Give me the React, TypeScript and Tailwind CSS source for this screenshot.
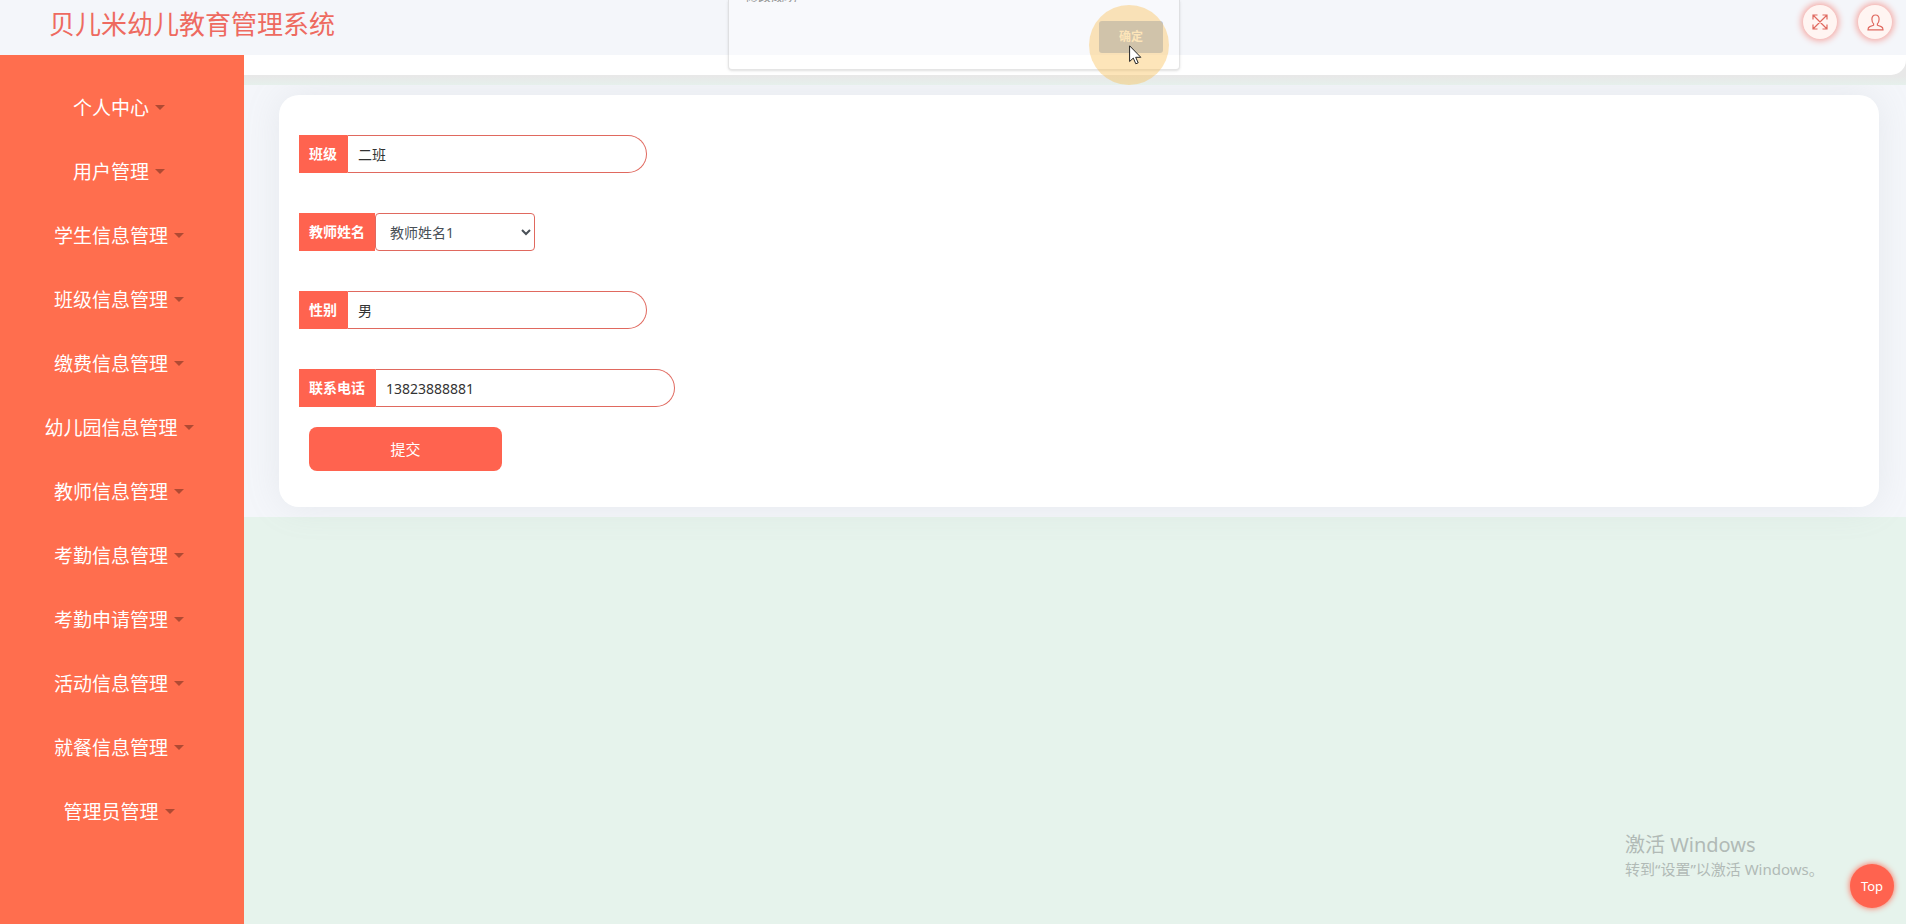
const menu: string[] = [
  '个人中心',
  '用户管理',
  '学生信息管理',
  '班级信息管理',
  '缴费信息管理',
  '幼儿园信息管理',
  '教师信息管理',
  '考勤信息管理',
  '考勤申请管理',
  '活动信息管理',
  '就餐信息管理',
  '管理员管理',
];

const labelClass =
  'flex h-full items-center bg-[#ff634f] px-[10px] font-bold text-white';

function TextField({ id, label, value }: { id: string; label: string; value: string }) {
  return (
    <div className="flex h-[38px]">
      <label htmlFor={id} className={labelClass}>
        {label}
      </label>
      <input
        id={id}
        type="text"
        defaultValue={value}
        className="h-full w-[300px] rounded-r-full border border-[#e0695f] border-l-[#ff634f] bg-white px-[10px] text-[#333] outline-none"
      />
    </div>
  );
}

function Header() {
  const round =
    'flex size-[34px] items-center justify-center rounded-full bg-[#fff5f2] text-[#e0695f] shadow-[0_0_6px_2px_#f5a9a4]';
  return (
    <header className="flex h-[55px] items-start justify-between bg-[#f4f6fa] pl-[49px] pr-[14px]">
      <h1 className="pt-1 text-[26px] leading-10 font-normal text-[#ee6a60]">贝儿米幼儿教育管理系统</h1>
      <div className="flex gap-[21px] pt-[5px]">
        <button type="button" aria-label="全屏" className={round}>
          <svg viewBox="0 0 16 16" className="size-4" fill="none" stroke="currentColor" strokeWidth="1.2">
            <path d="M1 5.500V1h4.500M10.500 1H15v4.500M15 10.500V15h-4.500M5.500 15H1v-4.500M1 1l14 14M15 1L1 15" />
          </svg>
        </button>
        <button type="button" aria-label="用户" className={round}>
          <svg viewBox="0 0 17 17" className="size-[17px]" fill="none" stroke="currentColor" strokeWidth="1.2">
            <path d="M6.600 9.800C5.400 8.600 4.900 7 4.900 5.200C4.900 2.500 6.300 1 8.500 1s3.600 1.500 3.600 4.200c0 1.800-.5 3.400-1.700 4.600v1.400l3.800 1.400c1.300.5 1.800 1.500 1.800 3.200H1c0-1.700.5-2.700 1.800-3.200l3.800-1.400z" />
          </svg>
        </button>
      </div>
    </header>
  );
}

function Sidebar() {
  return (
    <nav className="w-[244px] shrink-0 bg-[#ff6e4e] pt-[22px]">
      <ul>
        {menu.map((item) => (
          <li key={item}>
            <a href="#" className="flex h-16 items-center justify-center gap-[6px] pr-[6px] text-[19px] text-white">
              {item}
              <span className="mb-1 border-x-[5px] border-t-[5px] border-x-transparent border-t-[#b04a33]" />
            </a>
          </li>
        ))}
      </ul>
    </nav>
  );
}

function FadingDialog() {
  return (
    <div className="absolute top-0 left-1/2 z-20 h-[70px] w-[452px] -translate-x-[225px] rounded-b border border-t-0 border-black/10 bg-white/40 shadow-sm">
      <div className="h-[2px] overflow-hidden pl-4">
        <p className="-mt-3 text-[13px] leading-4 text-[#999]">修改成功</p>
      </div>
      <button
        type="button"
        className="absolute top-[21px] right-4 h-8 w-16 rounded-[3px] bg-[#b4c6e6] text-xs font-bold text-white"
      >
        确定
      </button>
      <span className="pointer-events-none absolute right-[10px] top-[5px] size-20 rounded-full bg-[#fabe50]/40" />
      <svg viewBox="0 0 13 20" className="pointer-events-none absolute top-[45px] right-[37px] h-5 w-[13px]">
        <path d="M.6.8v15.700l3.700-3.400 2.500 5.700 2.400-1-2.500-5.500h5.100z" fill="#fff" stroke="#222" strokeWidth="1" />
      </svg>
    </div>
  );
}

export default function App() {
  return (
    <div className="relative flex min-h-screen flex-col overflow-hidden bg-[#e6f3ec] font-['Noto_Sans','Noto_Sans_CJK_SC',sans-serif] text-sm">
      <Header />
      <div className="flex flex-1">
        <Sidebar />
        <main className="min-w-0 flex-1">
          <div className="relative z-10 h-[30px] bg-linear-to-b from-[#e8e8e8] from-70% to-[#e6f0ec]">
            <div className="h-5 rounded-br-[15px] bg-white" />
          </div>
          <section className="bg-[#f4f6fa] py-[10px] pr-[27px] pl-[35px]">
            <form
              className="rounded-[20px] bg-white px-5 pt-10 pb-9 shadow-[0_0_35px_rgba(154,161,171,0.15)]"
              onSubmit={(e) => e.preventDefault()}
            >
              <div className="flex flex-col items-start gap-10">
                <TextField id="class" label="班级" value="二班" />
                <div className="flex h-[38px]">
                  <label htmlFor="teacher" className={labelClass}>
                    教师姓名
                  </label>
                  <select
                    id="teacher"
                    className="h-full w-[160px] rounded border border-[#e0695f] bg-white pl-[10px] text-[#495057] outline-none"
                  >
                    <option>教师姓名1</option>
                  </select>
                </div>
                <TextField id="gender" label="性别" value="男" />
                <TextField id="phone" label="联系电话" value="13823888881" />
              </div>
              <button
                type="submit"
                className="mt-5 ml-[10px] block h-11 w-[193px] rounded-lg bg-[#ff634f] pt-[2px] text-[15px] text-white"
              >
                提交
              </button>
            </form>
          </section>
        </main>
      </div>
      <FadingDialog />
      <div className="pointer-events-none absolute right-[80px] bottom-[45px] w-[201px] whitespace-nowrap text-[#b1bab6]">
        <p className="text-xl leading-7">激活 Windows</p>
        <p className="text-[15px] leading-5">转到“设置”以激活 Windows。</p>
      </div>
      <a
        href="#"
        className="absolute right-3 bottom-4 flex size-11 items-center justify-center rounded-full bg-[#ff634f] text-[13px] text-white shadow-[0_0_6px_#ff634f]"
      >
        Top
      </a>
    </div>
  );
}
